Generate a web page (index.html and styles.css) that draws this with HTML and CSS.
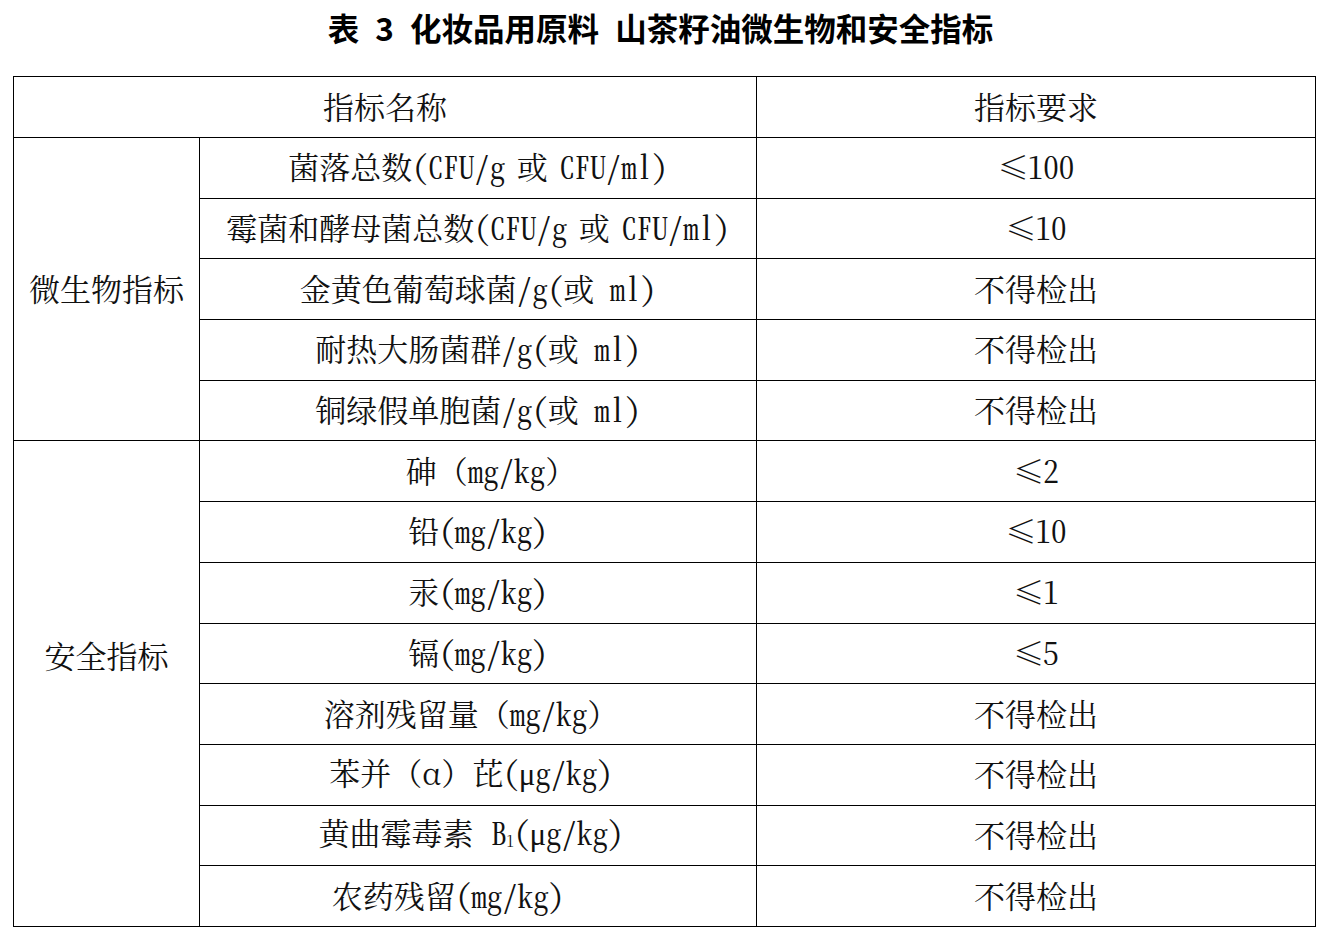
FILE: index.html
```html
<!DOCTYPE html>
<html lang="zh-CN">
<head>
<meta charset="utf-8">
<title>表 3 化妆品用原料 山茶籽油微生物和安全指标</title>
<link rel="stylesheet" href="styles.css">
</head>
<body>
<h1 class="title">表 3 化妆品用原料 山茶籽油微生物和安全指标</h1>
<table class="spec">
  <colgroup>
    <col class="c1">
    <col class="c2">
    <col class="c3">
  </colgroup>
  <thead>
    <tr class="head">
      <th colspan="2">指标名称</th>
      <th>指标要求</th>
    </tr>
  </thead>
  <tbody>
    <tr>
      <td rowspan="5" class="group">微生物指标</td>
      <td class="tight">菌落总数(CFU/g 或 CFU/ml)</td>
      <td><span class="le">≤</span>100</td>
    </tr>
    <tr>
      <td class="tight">霉菌和酵母菌总数(CFU/g 或 CFU/ml)</td>
      <td><span class="le">≤</span>10</td>
    </tr>
    <tr>
      <td>金黄色葡萄球菌/g(或 ml)</td>
      <td>不得检出</td>
    </tr>
    <tr>
      <td>耐热大肠菌群/g(或 ml)</td>
      <td>不得检出</td>
    </tr>
    <tr>
      <td>铜绿假单胞菌/g(或 ml)</td>
      <td>不得检出</td>
    </tr>
    <tr>
      <td rowspan="8" class="group group-safe">安全指标</td>
      <td class="shift-r">砷<span class="fw">（</span>mg/kg<span class="fw">）</span></td>
      <td><span class="le">≤</span>2</td>
    </tr>
    <tr>
      <td>铅(mg/kg)</td>
      <td><span class="le">≤</span>10</td>
    </tr>
    <tr>
      <td>汞(mg/kg)</td>
      <td><span class="le">≤</span>1</td>
    </tr>
    <tr>
      <td>镉(mg/kg)</td>
      <td><span class="le">≤</span>5</td>
    </tr>
    <tr>
      <td class="shift-l">溶剂残留量<span class="fw">（</span>mg/kg<span class="fw">）</span></td>
      <td>不得检出</td>
    </tr>
    <tr>
      <td class="shift-l">苯并<span class="fw">（</span><span class="greek-fw">α</span><span class="fw">）</span>芘(<span class="greek">μ</span>g/kg)</td>
      <td>不得检出</td>
    </tr>
    <tr>
      <td class="shift-l wide">黄曲霉毒素 B<sub class="sub">1</sub>(<span class="greek">μ</span>g/kg)</td>
      <td>不得检出</td>
    </tr>
    <tr>
      <td class="shift-ll">农药残留(mg/kg)</td>
      <td>不得检出</td>
    </tr>
  </tbody>
</table>
</body>
</html>
```

FILE: styles.css
```css
html, body {
  margin: 0;
  padding: 0;
  background: #ffffff;
}

body {
  color: #000000;
}

.title {
  margin: 0 0 22px 0;
  height: 54px;
  line-height: 54px;
  text-align: center;
  font-family: "Noto Sans CJK SC", "Liberation Sans", sans-serif;
  font-weight: 700;
  font-size: 31.5px;
  word-spacing: 9px;
  padding-right: 10px;
}

.spec {
  margin-left: 13px;
  width: 1302px;
  border-collapse: collapse;
  table-layout: fixed;
  font-family: "Noto Serif CJK SC", "Liberation Serif", "Noto Sans CJK SC", serif;
  font-feature-settings: "hwid" 1;
  font-size: 31px;
  color: #111111;
}

.c1 { width: 186px; }
.c2 { width: 557px; }
.c3 { width: 559px; }

.spec th,
.spec td {
  border: 1px solid #000000;
  padding: 0 0 3px 0;
  text-align: center;
  vertical-align: middle;
  font-weight: 400;
  line-height: 36px;
  white-space: nowrap;
}

.head {
  height: 61px;
}

.spec tbody tr {
  height: 60.7px;
}

.group-safe {
  padding-bottom: 58px !important;
}

.tight {
  word-spacing: -4px;
}

.wide {
  word-spacing: 2px;
}

.fw {
  font-feature-settings: normal;
}

.greek-fw {
  font-feature-settings: "fwid" 1;
}

.greek {
  font-family: "Liberation Serif", serif;
  font-feature-settings: normal;
}

.le {
  font-feature-settings: normal;
  display: inline-block;
  width: 30px;
  text-align: left;
}

.sub {
  font-size: 15px;
  vertical-align: -2px;
  line-height: 0;
}

.shift-r { padding-left: 26px !important; }
.shift-l { padding-right: 14px !important; }
.shift-ll { padding-right: 60px !important; }
```
